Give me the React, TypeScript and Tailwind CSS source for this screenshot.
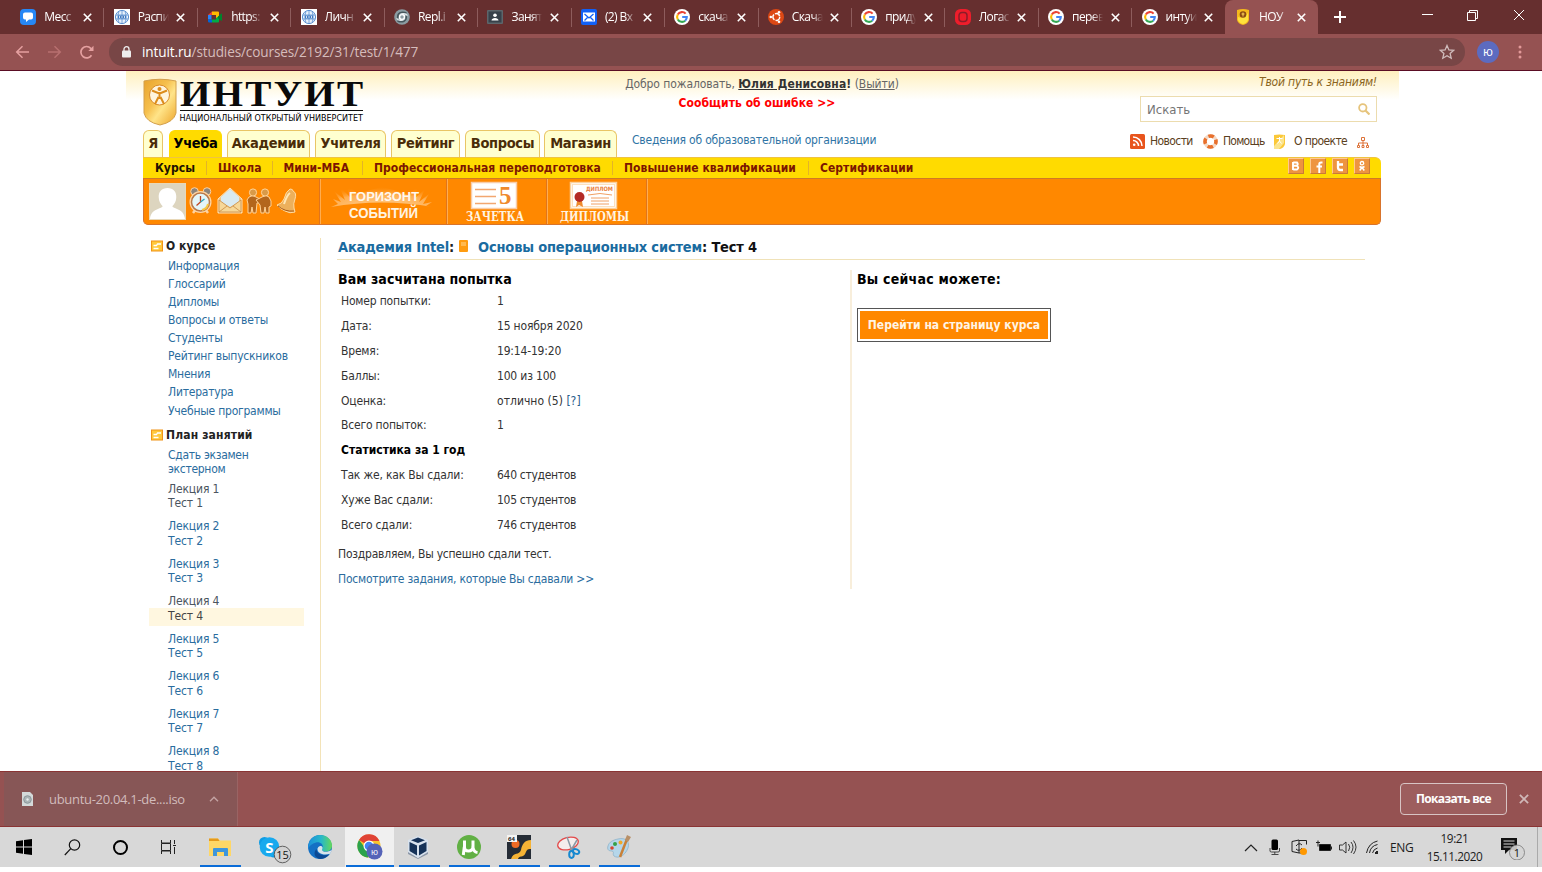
import type { ReactNode } from "react";

const ui = "font-['Open_Sans','Noto_Sans',sans-serif]";

/* ---------- favicons ---------- */

const Google = () => (
  <svg className="size-4" viewBox="0 0 16 16">
    <circle cx="8" cy="8" r="8" fill="#fff" />
    <g fill="none" strokeWidth="2.1">
      <path d="M11.6 4.6A4.9 4.9 0 0 0 3.8 5.5" stroke="#ea4335" />
      <path d="M3.8 5.5a4.9 4.9 0 0 0 0 5" stroke="#fbbc05" />
      <path d="M3.8 10.5a4.9 4.9 0 0 0 7.4 1.2" stroke="#34a853" />
      <path d="M11.2 11.7A4.9 4.9 0 0 0 12.8 8H8.2" stroke="#4285f4" />
    </g>
  </svg>
);
const Message = () => (
  <svg className="size-4" viewBox="0 0 16 16">
    <rect width="16" height="16" rx="4" fill="#2787f5" />
    <path d="M5 3.5h6A2 2 0 0 1 13 5.500v3a2 2 0 0 1-2 2H9L6 13v-2.500H5a2 2 0 0 1-2-2v-3a2 2 0 0 1 2-2z" fill="#fff" />
  </svg>
);
const Globe = () => (
  <svg className="size-4" viewBox="0 0 16 16">
    <rect width="16" height="16" fill="#fff" />
    <circle cx="8" cy="8" r="6.600" fill="#e8f1fb" stroke="#5b8fd0" />
    <path d="M2 6h12M2 10h12M8 1.500v13M5 2.500c-1.500 3-1.500 8 0 11M11 2.500c1.500 3 1.500 8 0 11" stroke="#5b8fd0" strokeWidth=".8" fill="none" />
    <path d="M4 6.500h8v3H4z" fill="#3f78c0" />
    <path d="M5.500 7v2M8 7v2M10.500 7v2" stroke="#fff" strokeWidth=".8" />
  </svg>
);
const Meet = () => (
  <svg className="size-4" viewBox="0 0 16 16">
    <path d="M1 6l4-3.500v3.500z" fill="#ea4335" />
    <path d="M1 6h3.500v4.500H1z" fill="#2684fc" />
    <path d="M1 10.500h4v3H2.200A1.200 1.200 0 0 1 1 12.300z" fill="#0066da" />
    <path d="M5 2.500h6a1 1 0 0 1 1 1V8L9 10V6H5z" fill="#ffba00" />
    <path d="M5 10.500h4V9l3-2v5.500a1 1 0 0 1-1 1H5z" fill="#00ac47" />
    <path d="M11 7.500l3.200-3c.4-.3.800 0 .8.400v6.500c0 .4-.5.700-.8.400L11 9.300z" fill="#00832d" />
  </svg>
);
const Replit = () => (
  <svg className="size-4" viewBox="0 0 16 16">
    <circle cx="8" cy="8" r="7.800" fill="#8b9ca2" />
    <g fill="none" strokeWidth="1.500">
      <circle cx="8" cy="8" r="2.500" stroke="#fff" />
      <path d="M3.800 9C3 4.500 7 1.800 12.500 4M12.200 7c.8 4.500-3.200 7.200-8.700 5" stroke="#46565c" />
      <path d="M5.500 6.500C7 3.800 11.500 4 13.500 6.500M10.500 9.500C9 12.200 4.500 12 2.500 9.500" stroke="#e8eef0" strokeWidth="1.200" />
    </g>
  </svg>
);
const Classroom = () => (
  <svg className="size-4" viewBox="0 0 16 16">
    <rect y="1" width="16" height="14" rx="1" fill="#5d666b" />
    <rect x="1.500" y="2.500" width="13" height="11" fill="#37414a" />
    <circle cx="8" cy="6.300" r="1.800" fill="#fff" />
    <path d="M4.500 11.500c0-3.500 7-3.500 7 0z" fill="#fff" />
  </svg>
);
const Mail = () => (
  <svg className="size-4" viewBox="0 0 16 16">
    <rect width="16" height="16" rx="2" fill="#1260f5" />
    <rect x="2" y="3.500" width="12" height="9" fill="#fff" />
    <path d="M3.500 5L8 9l4.500-4M3.500 11.500l3-3M12.500 11.500l-3-3" stroke="#1260f5" strokeWidth="1.300" fill="none" />
  </svg>
);
const Ubuntu = () => (
  <svg className="size-4" viewBox="0 0 16 16">
    <circle cx="8" cy="8" r="8" fill="#dd4814" />
    <circle cx="8.300" cy="8" r="3.400" fill="none" stroke="#fff" strokeWidth="1.500" strokeDasharray="6 1.120" />
    <circle cx="2.800" cy="8" r="1.300" fill="#fff" />
    <circle cx="11" cy="3.300" r="1.300" fill="#fff" />
    <circle cx="11" cy="12.700" r="1.300" fill="#fff" />
  </svg>
);
const RedO = () => (
  <svg className="size-4" viewBox="0 0 16 16">
    <rect width="16" height="16" rx="5.500" fill="#ee1d2b" />
    <rect x="4" y="3.500" width="8" height="9" rx="3" fill="none" stroke="#8c1c28" strokeWidth="1.500" />
    <rect x="6.300" y="5.800" width="3.400" height="4.400" rx="1" fill="#ee1d2b" />
  </svg>
);
const MiniShield = ({ className = "size-4" }: { className?: string }) => (
  <svg className={className} viewBox="0 0 16 16">
    <path d="M2 1q6-2 12 0v10q-1 4-6 5-5-1-6-5z" fill="#f6b91c" />
    <path d="M3 8q5 2 10-4v7q-1 3-5 4-4-1-5-4z" fill="#ffe23c" />
    <circle cx="8" cy="5.500" r="3.300" fill="#8a4a12" />
    <path d="M8 3.500v4M6.500 5h3" stroke="#ffd75a" strokeWidth="1" />
  </svg>
);

const tabs: [string, ReactNode][] = [
  ["Месс", <Message />],
  ["Распи", <Globe />],
  ["https:", <Meet />],
  ["Личн", <Globe />],
  ["Repl.i", <Replit />],
  ["Занят", <Classroom />],
  ["(2) Вх", <Mail />],
  ["скача", <Google />],
  ["Скача", <Ubuntu />],
  ["приду", <Google />],
  ["Логас", <RedO />],
  ["перев", <Google />],
  ["интуи", <Google />],
  ["НОУ", <MiniShield />],
];

const Cross = ({ className = "size-[9px]" }: { className?: string }) => (
  <svg className={className} viewBox="0 0 9 9">
    <path d="M.8.8l7.400 7.400M8.200.8L.8 8.200" stroke="currentColor" strokeWidth="1.600" />
  </svg>
);

function TabStrip() {
  return (
    <div className="flex h-[34px] bg-[#662f2f] pl-[10px] text-white">
      {tabs.map(([title, icon], i) => {
        const active = i === 13;
        return (
          <div
            key={i}
            className={
              "relative flex w-[93.450px] shrink-0 items-center pl-[10.300px] " +
              (active ? "rounded-t-[8px] bg-[#955252]" : "")
            }
          >
            {i > 0 && !active && <span className="absolute top-[8px] left-0 h-[19px] w-px bg-[#8e5c5c]" />}
            {icon}
            <span className="ml-[8px] w-[31px] text-[12px] tracking-[-0.600px] whitespace-nowrap [mask-image:linear-gradient(to_right,#000_65%,transparent)]">
              {title}
            </span>
            <Cross className="ml-[7.500px] size-[9px] shrink-0" />
          </div>
        );
      })}
      <div className="flex flex-1 items-center pl-[16px]">
        <svg className="size-[12px]" viewBox="0 0 12 12">
          <path d="M6 0v12M0 6h12" stroke="#fff" strokeWidth="2" />
        </svg>
        <svg className="ml-auto h-[12px] w-[103px] -translate-y-[2px]" viewBox="0 0 103 12">
          <g stroke="#fff" strokeWidth="1" fill="none">
            <path d="M0 5.500h11M45.500 3.500h8v8h-8zM47.500 3.500v-2h8v8h-2M92 1l10 10M102 1L92 11" />
          </g>
        </svg>
        <span className="w-[17px]" />
      </div>
    </div>
  );
}

function Toolbar() {
  return (
    <div className="flex h-[37px] items-center border-b border-[#5a0d24] bg-[#955252] pl-[15px]">
      <svg className="h-[14px] w-[80px]" viewBox="0 0 80 14" fill="none" strokeWidth="1.500">
        <path d="M14 7H2M7.500 1.200L1.700 7l5.800 5.800" stroke="#e5a0a0" />
        <path d="M33 7h12M39.500 1.200L45.300 7l-5.800 5.800" stroke="#b87070" />
        <path d="M76.500 10.200A5.700 5.700 0 1 1 75.800 3.300L77.500 5" stroke="#e5a0a0" strokeWidth="1.700" />
        <path d="M78.500.8v5.200h-5.200z" fill="#e5a0a0" />
      </svg>
      <div className="ml-[14px] flex h-[28px] w-[1356px] items-center rounded-full bg-[#784646] pl-[13px]">
        <svg className="h-[12px] w-[9px]" viewBox="0 0 9 12">
          <rect y="4.500" width="9" height="7" rx="1" fill="#eee" />
          <path d="M2 5V3.200a2.500 2.500 0 0 1 5 0V5" stroke="#eee" strokeWidth="1.300" fill="none" />
        </svg>
        <span className={"ml-[11px] pt-px text-[13.600px] tracking-[-0.130px] text-[#d6bcbc] " + ui}>
          <span className="text-white">intuit.ru</span>/studies/courses/2192/31/test/1/477
        </span>
        <svg className="mr-[10px] ml-auto size-[16px]" viewBox="0 0 16 16">
          <path d="M8 1.500l1.900 4.400 4.800.4-3.600 3.200 1.100 4.700L8 11.700l-4.200 2.500 1.100-4.700L1.300 6.300l4.800-.4z" fill="none" stroke="#d0bcbc" strokeWidth="1.300" />
        </svg>
      </div>
      <div className={"ml-[12px] flex size-[22px] items-center justify-center rounded-full bg-[#5c6bc0] text-[12px] text-white " + ui}>ю</div>
      <svg className="ml-[19px] h-[14px] w-[4px]" viewBox="0 0 4 14" fill="#e39a9a">
        <circle cx="2" cy="2" r="1.500" />
        <circle cx="2" cy="7" r="1.500" />
        <circle cx="2" cy="12" r="1.500" />
      </svg>
    </div>
  );
}

/* ---------- site header ---------- */

function Logo() {
  return (
    <svg className="h-[50px] w-[222px] shrink-0 overflow-visible" viewBox="143 77 222 50">
      <defs>
        <linearGradient id="shield" x1="0" y1="0" x2="1" y2="1">
          <stop offset="0" stopColor="#e8a32c" />
          <stop offset=".4" stopColor="#f6c04e" />
          <stop offset=".6" stopColor="#ffe489" />
          <stop offset="1" stopColor="#eda428" />
        </linearGradient>
      </defs>
      <path d="M144 81q16-3.500 32 0v32q-2 9-16 12-14-3-16-12z" fill="url(#shield)" stroke="#d3a04c" />
      <circle cx="159.500" cy="95" r="10" fill="#fff4dc" stroke="#d98c2c" />
      <circle cx="159.500" cy="89" r="2" fill="#dc8c1c" />
      <path d="M152 90.500l6 2.500h3l6-2.500M159.500 92v7M158.500 97l-3.500 7M160.500 97l3.500 7" stroke="#dc8c1c" strokeWidth="2" fill="none" />
      <g transform="translate(180 105.700) scale(1.120 1)">
        <text textLength="163.500" lengthAdjust="spacing" fontFamily="Liberation Serif" fontWeight="700" fontSize="35" fill="#0a0a0a">ИНТУИТ</text>
      </g>
      <path d="M180 110.500h183" stroke="#111" strokeWidth="1.200" />
      <text x="179.500" y="121" textLength="183.500" lengthAdjust="spacingAndGlyphs" fontFamily="DejaVu Sans, sans-serif" fontSize="8" fill="#000">НАЦИОНАЛЬНЫЙ ОТКРЫТЫЙ УНИВЕРСИТЕТ</text>
    </svg>
  );
}

function Header() {
  return (
    <div className="mx-auto ml-[126px] flex h-[59px] w-[1273px] bg-[linear-gradient(#fff0be,#fff_29px)] pl-[17px]">
      <div className="pt-[6px]">
        <Logo />
      </div>
      <div className="ml-[199px] w-[396px] pt-[4px] text-center text-[12px] leading-[18px] text-[#666]">
        <div className="tracking-[-0.080px]">
          Добро пожаловать, <b className="tracking-[0.130px] text-[#333]"><span className="underline">Юлия Денисовна</span>!</b> (<span className="underline">Выйти</span>)
        </div>
        <div className="pt-px pr-[10px] font-bold text-[#f00] tracking-[0.050px]">Сообщить об ошибке &gt;&gt;</div>
      </div>
      <div className="ml-auto mr-[22px] w-[237px]">
        <div className="pt-[2px] text-right text-[12px] leading-[18px] tracking-[-0.200px] text-[#8a6420] italic">Твой путь к знаниям!</div>
        <div className="mt-[5px] flex h-[26px] items-center justify-between border border-[#ecdcae] bg-white pt-px pr-[6px] pl-[6px] text-[13px] text-[#757575]">
          Искать
          <svg className="-mt-[2px] size-[12px]" viewBox="0 0 12 12" fill="none" stroke="#e6c47c">
            <circle cx="4.800" cy="4.800" r="3.700" strokeWidth="1.800" />
            <path d="M7.500 7.500l4 4" strokeWidth="2.200" />
          </svg>
        </div>
      </div>
    </div>
  );
}

function TopLink({ children }: { children: ReactNode }) {
  return <span className="whitespace-nowrap text-[#5a4020]">{children}</span>;
}

function MainNav() {
  const tab =
    "flex h-[27px] items-center justify-center rounded-t-[6px] border border-b-0 border-[#e9c566] bg-[#ffffd0] text-[14.500px] tracking-[-0.350px] font-bold text-[#4a2c08] whitespace-nowrap ";
  return (
    <div className="ml-[143px] flex h-[27px] w-[1238px]">
      <div className={tab + "w-[20px]"}>Я</div>
      <div className={tab + "ml-[6px] w-[53px] border-[#ffdb00]! bg-[#ffdb00]! text-black!"}>Учеба</div>
      <div className={tab + "ml-[5px] w-[83px]"}>Академии</div>
      <div className={tab + "ml-[5px] w-[71px]"}>Учителя</div>
      <div className={tab + "ml-[5px] w-[69px]"}>Рейтинг</div>
      <div className={tab + "ml-[5px] w-[75px]"}>Вопросы</div>
      <div className={tab + "ml-[4px] w-[73px]"}>Магазин</div>
      <div className="ml-[15px] pt-[1px] text-[12px] leading-[19px] tracking-[-0.180px] text-[#2f74a5]">Сведения об образовательной организации</div>
      <div className="mr-[12px] ml-auto flex h-[22px] items-center text-[12px]">
        <svg className="mr-[5px] size-[15px]" viewBox="0 0 15 15">
          <rect width="15" height="15" rx="1.500" fill="#e8541c" />
          <g fill="none" stroke="#fff" strokeWidth="1.500">
            <path d="M3 6.500A5.500 5.500 0 0 1 8.500 12M3 3a9 9 0 0 1 9 9" />
          </g>
          <circle cx="4.200" cy="10.800" r="1.300" fill="#fff" />
        </svg>
        <span className="w-[53px] tracking-[-0.600px]"><TopLink>Новости</TopLink></span>
        <svg className="mr-[5px] size-[15px]" viewBox="0 0 15 15" fill="none">
          <circle cx="7.500" cy="7.500" r="5.500" stroke="#f3d9c6" strokeWidth="3.600" />
          <circle cx="7.500" cy="7.500" r="5.500" stroke="#e8702c" strokeWidth="3.600" strokeDasharray="5.600 3.040" strokeDashoffset="-5.800" />
        </svg>
        <span className="w-[50px] tracking-[-0.750px]"><TopLink>Помощь</TopLink></span>
        <svg className="mr-[8px] h-[15px] w-[13px]" viewBox="0 0 13 15">
          <path d="M1 1q5-1 11 0v9q-1 4-5 5H1z" fill="#fbc838" />
          <path d="M1 12L11 1v8L6 15H1z" fill="#fbe48c" />
          <path d="M3.500 4.500h6M6.500 3v4M6.500 7l-2 2.500M6.500 7l2 2.500" stroke="#fff" fill="none" />
        </svg>
        <span className="w-[63px] tracking-[-0.600px]"><TopLink>О проекте</TopLink></span>
        <svg className="mt-[3px] h-[12px] w-[12px]" viewBox="0 0 12 12" fill="none" stroke="#dd7238">
          <path d="M4.500.5h3v3h-3zM.5 8.500h2v2h-2zM5 8.500h2v2H5zM9.500 8.500h2v2h-2zM6 3.500v5M1.500 8V6h9v2" />
        </svg>
      </div>
    </div>
  );
}

function Social({ children }: { children: ReactNode }) {
  return (
    <svg className="size-[16px] rounded-[1px] border border-[#c9793a] border-t-[#ffc890] border-l-[#ffc890] bg-[#ee9440]" viewBox="0 0 14 14">
      {children}
    </svg>
  );
}

function SubNav() {
  const sep = "h-[14px] w-px shrink-0 bg-[#e3b428] mt-[3px]";
  const item = "shrink-0 text-[12px] leading-[20px] font-bold text-[#7c1500] whitespace-nowrap tracking-[0.050px] ";
  return (
    <div className="flex h-[21px] border-t border-[#efc341] rounded-tr-[6px] bg-[#ffdb00] pl-[12px]">
      <span className={item + "w-[51px] text-[#201000]!"}>Курсы</span>
      <i className={sep} />
      <span className={item + "w-[64.500px] pl-[11px]"}>Школа</span>
      <i className={sep} />
      <span className={item + "w-[89.500px] pl-[11px]"}>Мини-МБА</span>
      <i className={sep} />
      <span className={item + "w-[249px] pl-[11px] tracking-[0.010px]!"}>Профессиональная переподготовка</span>
      <i className={sep} />
      <span className={item + "w-[195px] pl-[11px]"}>Повышение квалификации</span>
      <i className={sep} />
      <span className={item + "pl-[11px]"}>Сертификации</span>
      <div className="mr-[11px] ml-auto flex gap-[6px]">
        <Social><path d="M4 3v8M4.200 3.500H8q1.500 1.700 0 3.300H4.500M8 7q2.500 1.800 0 3.500H4.200" fill="none" stroke="#fff" strokeWidth="1.900" /></Social>
        <Social><path d="M11.500 3.500H10Q8.300 3.500 8.300 5v9M5.500 7.500h5.500" fill="none" stroke="#fff" strokeWidth="2" /></Social>
        <Social><path d="M5 2v6.500Q5 11 7.500 11H10M5 5.500h5" fill="none" stroke="#fff" strokeWidth="2.300" /></Social>
        <Social>
          <circle cx="7" cy="4.200" r="1.700" fill="none" stroke="#fff" strokeWidth="1.300" />
          <path d="M4.500 7.500q2.500 1.500 5 0M7 8.500l-2.300 3M7 8.500l2.300 3" fill="none" stroke="#fff" strokeWidth="1.500" />
        </Social>
      </div>
    </div>
  );
}

function OrangeBar() {
  return (
    <div className="flex h-[47px] rounded-b-[5px] border border-[#d8742c] border-t-[#cf7a24] bg-[#ff8800]">
      <div className="flex w-[176px] items-center border-r border-[#e0741c] pl-[5px]">
        <svg className="size-[37px] shrink-0 border border-[#e8d8b8] bg-[#ddd5bf]" viewBox="0 0 36 36">
          <path d="M18 4c6 0 9.500 4 9 10 0 4-2 7-4 9 1 3 12 2 13 13H0c1-11 12-10 13-13-2-2-4-5-4-9-.5-6 3-10 9-10z" fill="#fff" />
        </svg>
        <svg className="ml-[2px] h-[30px] w-[110px]" viewBox="188 187 110 30">
          <circle cx="194.500" cy="191.500" r="3.800" fill="#8d857c" stroke="#ffd2a0" />
          <circle cx="207" cy="191.500" r="3.800" fill="#8d857c" stroke="#ffd2a0" />
          <path d="M193 213l3-4M208 213l-3-4" stroke="#ffd2a0" strokeWidth="2.500" />
          <circle cx="200.500" cy="202" r="11" fill="#ffd6a4" />
          <circle cx="200.500" cy="202" r="9" fill="#e4f6f8" stroke="#b8794a" strokeWidth="1.500" />
          <path d="M200.500 196V202l-4 3.500" stroke="#c04420" fill="none" strokeWidth="1.300" />
          <path d="M200.500 202l4-3" stroke="#2aa3b8" strokeWidth="1.300" />
          <path d="M202 210a8 8 0 0 0 6-6" stroke="#f8c840" strokeWidth="2" fill="none" />
          <path d="M218 199l12-11 12 11v14h-24z" fill="#efc588" stroke="#ffe3b8" />
          <path d="M221 197l9-8 9 8v5l-9 5-9-5z" fill="#d9eaf0" />
          <path d="M219 200l11 8 11-8v12h-22zM219 212l8-6M241 212l-8-6" fill="#f7d898" stroke="#c98b43" strokeWidth=".8" />
          <g fill="#b3661c" stroke="#ffd49a" strokeWidth="1">
            <path d="M249 197q4-3 7 0l4 2 1 3-4 1-1 10h-3l-1-6-1 6h-3v-9l-1-4z" />
            <path d="M262 197q4-3 7 0l2 4v5l-2 1v6h-3l-1-6-1 6h-3l-1-8-4-5z" />
            <circle cx="253" cy="192.500" r="3.600" fill="#d99a48" />
            <circle cx="265" cy="192.500" r="3.600" fill="#d99a48" />
          </g>
          <path d="M290 189q3 0 3 2 4 2 2 8-2 5-1 9l1 4q-5 2-10-1-5-2-8-6 5-1 7-6 2-8 6-10z" fill="#ecb05c" stroke="#ffdca4" />
          <path d="M284 204q3-9 6-11" stroke="#ffe7b6" strokeWidth="2" fill="none" />
          <path d="M278 206q7 6 16 5" stroke="#a85c1c" fill="none" />
        </svg>
      </div>
      <div className="flex w-[127px] items-center justify-center border-r border-l border-[#e0741c] border-l-[#ffad50]">
        <svg className="h-[42px] w-[114px] overflow-visible" viewBox="326 180 114 42">
          <defs>
            <radialGradient id="glow" cx=".5" cy="1" r=".9">
              <stop offset="0" stopColor="#ffe2b8" />
              <stop offset=".6" stopColor="#ffb967" />
              <stop offset="1" stopColor="#ff8800" stopOpacity="0" />
            </radialGradient>
          </defs>
          <path d="M330 206l7-3-5-5 8 3-7-11 11 9-6-14 11 11-4-13 12 10 12-4 12-3 12 3 14 5 10-9-4 13 11-10-6 13 10-8-6 10 9-2-6 4 7 1q-52-9-102 0z" fill="url(#glow)" opacity=".8" />
          <text x="348" y="200" textLength="70" lengthAdjust="spacingAndGlyphs" fontFamily="Liberation Sans" fontWeight="700" fontSize="13.500" fill="#fff8ee">ГОРИЗОНТ</text>
          <text x="348" y="216.500" textLength="69" lengthAdjust="spacingAndGlyphs" fontFamily="Liberation Sans" fontWeight="700" fontSize="14" fill="#fff4e2">СОБЫТИЙ</text>
        </svg>
      </div>
      <div className="flex w-[100px] justify-center border-r border-l border-[#e0741c] border-l-[#ffad50]">
        <svg className="-ml-[3px] h-[44px] w-[66px] overflow-visible" viewBox="463 179 66 44">
          <rect x="471.500" y="182.500" width="45" height="26" fill="#fff" stroke="#f8cca8" strokeWidth="1.500" />
          <path d="M475 189.500h21M475 196.500h21M475 203.500h21" stroke="#f2a770" strokeWidth="1.500" />
          <text x="499" y="203.500" fontFamily="Liberation Serif" fontWeight="700" fontSize="25" fill="#ef8a2c">5</text>
          <text x="466" y="221" textLength="58" lengthAdjust="spacingAndGlyphs" fontFamily="DejaVu Serif, serif" fontWeight="700" fontSize="12" fill="#fff4e2">ЗАЧЕТКА</text>
        </svg>
      </div>
      <div className="flex w-[100px] justify-center border-r border-l border-[#e0741c] border-l-[#ffad50]">
        <svg className="-ml-[3px] h-[44px] w-[76px] overflow-visible" viewBox="558 179 76 44">
          <rect x="570.500" y="182.500" width="46" height="26" fill="#fff" stroke="#fbd09c" strokeWidth="1.500" />
          <rect x="572.500" y="184.500" width="42" height="22" fill="none" stroke="#f8c17c" strokeDasharray="1 1" />
          <path d="M577 201l-1 6 3-2 4 2-1-6" fill="#ef8a2c" />
          <circle cx="579.500" cy="197" r="5" fill="#b42a24" />
          <text x="586" y="191" textLength="27" lengthAdjust="spacingAndGlyphs" fontFamily="DejaVu Sans" fontWeight="700" fontSize="6" fill="#e9803c">ДИПЛОМ</text>
          <path d="M588 195q12-3 24 0M591 198h18M591 201h18M591 204h18" stroke="#f0a064" fill="none" />
          <text x="560" y="221" textLength="69" lengthAdjust="spacingAndGlyphs" fontFamily="DejaVu Serif, serif" fontWeight="700" fontSize="12" fill="#fff4e2">ДИПЛОМЫ</text>
        </svg>
      </div>
      <div className="w-px bg-[#ffad50]" />
    </div>
  );
}

/* ---------- page body ---------- */

const FolderIcon = () => (
  <svg className="mr-[3px] size-[12px]" viewBox="0 0 12 12">
    <rect x=".5" y="1" width="11" height="10" fill="#ffc83c" stroke="#f09418" />
    <path d="M2.500 5.500h3l1-1.500h3.500M2.500 8.500h5" stroke="#fff" strokeWidth="1.300" fill="none" />
  </svg>
);

const aboutLinks = ["Информация", "Глоссарий", "Дипломы", "Вопросы и ответы", "Студенты", "Рейтинг выпускников", "Мнения", "Литература", "Учебные программы"];

function Sidebar() {
  return (
    <div className="ml-[143px] h-[533px] w-[178px] shrink-0 overflow-hidden border-r border-[#f3e3b8] pl-[8px] text-[12px] tracking-[-0.220px] text-[#2a6c9e]">
      <div className="flex h-[16px] items-center font-bold tracking-[0.080px] text-[#222]"><FolderIcon />О курсе</div>
      <div className="mt-[3px] pl-[17px]">
        {aboutLinks.map((t) => (
          <div key={t} className="h-[18.070px] leading-[18px]">{t}</div>
        ))}
      </div>
      <div className="mt-[7px] flex h-[17px] items-center font-bold tracking-[0.150px] text-[#222]"><FolderIcon />План занятий</div>
      <div className="mt-[4px] pl-[17px] leading-[14.400px] tracking-[-0.300px]">Сдать экзамен<br />экстерном</div>
      <div className="mt-[5.300px] tracking-[-0.150px]">
        {[1, 2, 3, 4, 5, 6, 7, 8].map((n) => (
          <div key={n} className="h-[37.500px] leading-[14.600px]">
            <div className={n === 1 || n === 4 ? "pl-[17px] text-[#4b5560]" : "pl-[17px]"}>Лекция {n}</div>
            {n === 4 ? (
              <div className="-mt-px -ml-[2px] h-[18px] w-[155px] bg-[#fff7e0] pl-[19px] leading-[16px] text-[#444]">Тест 4</div>
            ) : (
              <div className={n === 1 ? "pl-[17px] text-[#4b5560]" : "pl-[17px]"}>Тест {n}</div>
            )}
          </div>
        ))}
      </div>
    </div>
  );
}

const rows: [string, ReactNode][] = [
  ["Номер попытки:", "1"],
  ["Дата:", "15 ноября 2020"],
  ["Время:", "19:14-19:20"],
  ["Баллы:", "100 из 100"],
  ["Оценка:", <>отлично (5) <span className="text-[#2a5c8a]">[?]</span></>],
  ["Всего попыток:", "1"],
  ["Статистика за 1 год", ""],
  ["Так же, как Вы сдали:", "640 студентов"],
  ["Хуже Вас сдали:", "105 студентов"],
  ["Всего сдали:", "746 студентов"],
];

function Result() {
  return (
    <div className="ml-[16px] w-[1028px] text-[12px] text-[#333]">
      <div className="flex h-[22px] items-center border-b border-[#f0e2b8] pb-[2px] pl-px text-[14.500px] font-bold tracking-[-0.180px] text-[#1a6ba0]">
        Академия Intel<span className="text-[#222]">:</span>
        <svg className="mr-[10px] -mt-[4px] ml-[5px] h-[12px] w-[9px]" viewBox="0 0 9 12">
          <rect width="9" height="12" rx="1" fill="#ff9c10" />
          <path d="M2 3h5M2 5h5" stroke="#ffd890" />
        </svg>
        Основы операционных систем<span className="whitespace-pre text-[#111]">: Тест 4</span>
      </div>
      <div className="mt-[10px] flex">
        <div className="h-[319px] w-[515px] border-r-2 border-[#f8eedb]">
          <div className="pl-px text-[14px] leading-[18px] font-bold tracking-[0.050px] text-black">Вам засчитана попытка</div>
          <div className="pl-[4px] tracking-[-0.180px]">
            {rows.map(([k, v]) => (
              <div key={k} className="flex h-[24.890px] leading-[26px]">
                <span className={v === "" ? "w-[156px] font-bold tracking-normal text-black" : "w-[156px]"}>{k}</span>
                <span className={k === "Оценка:" ? "tracking-[0.030px]" : k.endsWith("сдали:") ? "tracking-[-0.300px]" : ""}>{v}</span>
              </div>
            ))}
          </div>
          <div className="mt-[5px] pl-px leading-[25px] tracking-[-0.220px]">Поздравляем, Вы успешно сдали тест.</div>
          <div className="pl-px leading-[25px] tracking-[-0.220px] text-[#2a6c9e]">Посмотрите задания, которые Вы сдавали &gt;&gt;</div>
        </div>
        <div className="pl-[5px]">
          <div className="text-[14px] leading-[18px] font-bold tracking-[0.230px] text-black">Вы сейчас можете:</div>
          <div className="mt-[20px] flex h-[34px] w-[194px] items-center justify-center border border-[#555] bg-[#ff8800] text-[12px] font-bold whitespace-nowrap text-[#fff4e6] inset-ring-2 inset-ring-white">
            Перейти на страницу курса
          </div>
        </div>
      </div>
    </div>
  );
}

/* ---------- downloads bar and taskbar ---------- */

function Downloads() {
  return (
    <div className={"flex h-[56px] items-center border-t border-b border-[#8a3434] bg-[#955252] " + ui}>
      <div className="ml-[4px] flex h-full w-[234px] items-center border-r border-[#9a6464] bg-[#875656] pl-[18px] text-[13px] text-[#d2bcbc]">
        <svg className="h-[14px] w-[11px]" viewBox="0 0 11 14">
          <path d="M0 0h8l3 3v11H0z" fill="#d4dada" />
          <circle cx="5.500" cy="7.500" r="3.800" fill="#aab4b6" stroke="#8b979b" />
          <circle cx="5.500" cy="7.500" r="1.200" fill="#e8eeee" />
        </svg>
        <span className="ml-[16px] w-[160px] pt-[2px] tracking-[-0.300px]">ubuntu-20.04.1-de....iso</span>
        <svg className="h-[6px] w-[10px]" viewBox="0 0 10 6"><path d="M1 5.200L5 1.200l4 4" stroke="#c4a4a4" strokeWidth="1.400" fill="none" /></svg>
      </div>
      <div className="mr-[12px] ml-auto flex h-[32px] w-[107px] items-center justify-center rounded-[4px] border border-[#d8c4c4] bg-[#9d5e5e] text-[12px] font-bold tracking-[-0.650px] text-white">Показать все</div>
      <Cross className="mr-[13px] size-[10px] text-[#d0b8b8]" />
    </div>
  );
}

function Task({ w, children, open, active }: { w: string; children: ReactNode; open?: boolean; active?: boolean }) {
  return (
    <div className={"relative flex h-[40px] shrink-0 items-center justify-center " + w + (active ? " bg-[#f0f0f0]" : "")}>
      {children}
      {open && <span className={"absolute bottom-0 h-[2px] bg-[#0a6cd8] " + (active ? "w-[48px]" : "w-[41px]")} />}
    </div>
  );
}

function Taskbar() {
  return (
    <div className={"flex h-[40px] bg-[#d8d8d8] text-[#1c1c1c] " + ui}>
      <Task w="w-[48px]">
        <svg className="size-[16px]" viewBox="0 0 16 16"><path d="M0 2.200l7-1v6.300H0zM8 1l8-1v7.500H8zM0 8.500h7v6.300l-7-1zM8 8.500h8V16l-8-1z" /></svg>
      </Task>
      <Task w="w-[48px]">
        <svg className="size-[17px]" viewBox="0 0 17 17" fill="none" stroke="#111" strokeWidth="1.200"><circle cx="10.500" cy="6" r="5.200" /><path d="M6.800 9.700L.8 16" /></svg>
      </Task>
      <Task w="w-[48px]">
        <span className="size-[15px] rounded-full border-2 border-black" />
      </Task>
      <Task w="w-[48px]">
        <svg className="h-[16px] w-[17px]" viewBox="0 0 17 16" fill="none" stroke="#222"><path d="M1.500 1v3h9V1M1.500 15v-3h9v3M1.500 4.500v7h9v-7zM14.500 1v4M14.500 8v7M13 6.500h3" /></svg>
      </Task>
      <Task w="w-[56px]" open>
        <svg className="h-[19px] w-[22px]" viewBox="0 0 22 19">
          <path d="M0 1.500Q0 .5 1 .5h8l2 2h11V18H0z" fill="#ffd766" />
          <path d="M0 .5h9l1.500 2.500H0z" fill="#e59a1c" />
          <path d="M4 18v-7q0-1 1-1h13q1 0 1 1v7h-4v-4H8v4z" fill="#3f96dc" />
        </svg>
      </Task>
      <Task w="w-[46px]">
        <svg className="h-[30px] w-[34px] translate-x-[4px] translate-y-[3px]" viewBox="0 0 34 30">
          <circle cx="6.500" cy="7.500" r="5.500" fill="#0f9ce4" />
          <circle cx="16" cy="17" r="5.500" fill="#0f9ce4" />
          <circle cx="11.500" cy="12" r="9.800" fill="#18a9ee" />
          <text x="11.500" y="17.500" textAnchor="middle" fontFamily="Open Sans" fontWeight="700" fontSize="15" fill="#fff">S</text>
          <circle cx="24.500" cy="19.500" r="8.300" fill="#d2d2d2" stroke="#444" strokeWidth=".8" />
          <text x="24.500" y="23.500" textAnchor="middle" fontFamily="Open Sans" fontSize="11" fill="#111">15</text>
        </svg>
      </Task>
      <Task w="w-[51px]">
        <svg className="size-[24px]" viewBox="0 0 24 24">
          <defs>
            <linearGradient id="edge" x1="0" y1=".3" x2="1" y2=".3"><stop offset="0" stopColor="#1b8edb" /><stop offset=".55" stopColor="#28b8c8" /><stop offset="1" stopColor="#65d858" /></linearGradient>
          </defs>
          <circle cx="12" cy="12" r="12" fill="#1470c4" />
          <path d="M.2 11C1 4.500 6 0 12 0c7 0 12 5 12 10.500 0 4-3 6-6.500 6-3 0-4.500-1.500-3-3.500C16 9 11.500 6.500 8 7.500 4 8.500 1 11 .2 14z" fill="url(#edge)" />
          <path d="M8.500 14c0 4.500 5 7.500 12.500 5.500 0 0-3 4.500-9 4.500-5-1-7.500-6-3.500-10z" fill="#0d4a94" />
          <path d="M12 11c3 0 3 2 2 3.500 0 2.500 5 3.500 9.800.2l-1.500 4C15 21 9 18 9.500 13.500q.5-2 2.500-2.500z" fill="#d8e4ea" />
        </svg>
      </Task>
      <Task w="w-[49px]" open active>
        <svg className="size-[26px]" viewBox="0 0 26 26">
          <circle cx="12" cy="12" r="11.500" fill="#fbc52c" />
          <path d="M12 12L2 6A11.500 11.500 0 0 1 22.500 7H12z" fill="#e04336" />
          <path d="M2 6a11.500 11.500 0 0 0 9 17.500L15 14l-6 1z" fill="#2ba24c" />
          <circle cx="12" cy="12" r="5.500" fill="#fff" /><circle cx="12" cy="12" r="4.300" fill="#4285f4" />
          <circle cx="17.500" cy="17.500" r="8" fill="#5563b8" />
          <text x="17.500" y="20.500" textAnchor="middle" fontFamily="Open Sans" fontSize="8.500" fill="#fff">ю</text>
        </svg>
      </Task>
      <Task w="w-[50px]" open>
        <svg className="size-[24px] -translate-x-px" viewBox="0 0 24 24">
          <path d="M2 16l10 7 10-7v3l-10 5-10-5z" fill="#8d98a8" />
          <path d="M2 5l10-4 10 4v12l-10 6-10-6z" fill="#d8e2ee" />
          <path d="M5 5.200L12 2.500l7 2.700-7 2.900zM3.500 7l7.500 3.500v10L3.500 16zM20.500 7L13 10.500v10l7.500-4.500z" fill="#163258" />
        </svg>
      </Task>
      <Task w="w-[50px]" open>
        <svg className="size-[24px]" viewBox="0 0 24 24">
          <circle cx="12" cy="12" r="12" fill="#61b044" />
          <path d="M7.500 5.500V12q0 4 4 4t4.500-4V5.500M7.300 12L6.300 20M15.800 11q.5 6 4.700 6.500" fill="none" stroke="#fff" strokeWidth="3" />
        </svg>
      </Task>
      <Task w="w-[50px]" open>
        <svg className="size-[24px]" viewBox="0 0 24 24">
          <rect width="24" height="24" fill="#252c36" />
          <path d="M4 24c3-8 8-3 10-9 1-6 4-10 10-10v9c-6-1-4 5-8 7-2 1-4 0-5 3z" fill="#f5b335" />
          <circle cx="8.500" cy="9" r="4" fill="#ee6a24" />
          <rect width="10" height="7" fill="#f4f4f4" />
          <text x="1" y="6" fontFamily="Open Sans" fontWeight="700" fontSize="6" fill="#222">64</text>
        </svg>
      </Task>
      <Task w="w-[50px]" open>
        <svg className="size-[24px]" viewBox="0 0 24 24" fill="none">
          <ellipse cx="11" cy="8.500" rx="10.500" ry="6" transform="rotate(-15 11 8.500)" fill="#f4eded" stroke="#e34a4a" strokeWidth="1.300" />
          <path d="M10 2l5 14M20 5l-7 12" stroke="#8a9aa6" strokeWidth="1.500" />
          <ellipse cx="14.500" cy="19.500" rx="2.300" ry="3.400" stroke="#1688d0" strokeWidth="2" />
          <ellipse cx="19" cy="16.500" rx="3.300" ry="2.200" stroke="#1688d0" strokeWidth="2" transform="rotate(20 19 16.500)" />
        </svg>
      </Task>
      <Task w="w-[50px]" open>
        <svg className="size-[24px]" viewBox="0 0 24 24">
          <path d="M11 4c8-2 12 3 10 9-3 8-10 11-14 8-2-2 1-4-2-5-4 0-5-2-4-5 1-4 5-6 10-7z" fill="#b5d6ea" stroke="#86aec6" strokeWidth=".7" />
          <circle cx="8" cy="9" r="2" fill="#35a048" /><circle cx="13.500" cy="7.500" r="2" fill="#f0a828" /><circle cx="5" cy="13" r="1.800" fill="#d84432" />
          <path d="M20 4l-7 18" stroke="#c98038" strokeWidth="2.500" /><path d="M18 5l2-5 4 2-3 5z" fill="#b89068" />
        </svg>
      </Task>
      <div className="ml-auto flex items-center">
        <svg className="h-[18px] w-[135px]" viewBox="1244 838 135 18" fill="none" stroke="#222">
          <path d="M1245 851l6-6 6 6" strokeWidth="1.200" />
          <rect x="1271.500" y="839.500" width="6.500" height="10.500" rx="1.500" fill="#000" stroke="none" />
          <path d="M1270 848v3q0 1 1.500 1h6.500q1.500 0 1.500-1v-3M1274.800 852v2M1271.500 854.500h7" strokeWidth=".8" />
          <path d="M1292 841.500l7-1.500v13l-7-1.500zM1299 840.500h7.500v4M1299 853h4M1296 846q3-4 6-1M1302 848q-3 4-6 1" />
          <circle cx="1303.500" cy="851.500" r="3.500" fill="#ff9800" stroke="none" />
          <path d="M1319.500 844.500h11v6h-11z" fill="#000" /><path d="M1331.500 846.500v3M1316 842.500h4M1318 840.500v6" />
          <path d="M1339.500 845v5h3l3.500 3v-11l-3.500 3zM1348.500 844q2.500 3 0 7M1351 842q4 5 0 11M1353.500 840.500q5 6.500 0 13.500" strokeWidth=".9" />
          <path d="M1366.500 853q2-10 11-12M1369.500 853q1-7 8-8.500M1372.500 853q1-4 5-5" strokeWidth="1" />
          <path d="M1375 853h2v-2" strokeWidth="2" />
        </svg>
        <span className="ml-[11px] w-[36px] pt-px text-[12px] tracking-[-0.300px]">ENG</span>
        <div className="w-[57px] text-center text-[11.800px] leading-[18px] tracking-[-0.450px]">19:21<br />15.11.2020</div>
        <svg className="ml-[18px] h-[26px] w-[25px]" viewBox="0 0 25 26">
          <path d="M0 4h16v12H8l-4 4v-4H0z" fill="#111" />
          <path d="M2.500 7h11M2.500 10h11M2.500 13h8" stroke="#d8d8d8" strokeWidth="1.100" />
          <circle cx="16" cy="18.500" r="7.500" fill="#d5d5d5" fillOpacity=".9" stroke="#777" strokeWidth=".8" />
          <text x="16" y="22.500" textAnchor="middle" fontFamily="Open Sans" fontSize="11" fill="#111">1</text>
        </svg>
        <span className="ml-[11px] h-[40px] w-[5px] border-l border-[#aaa]" />
      </div>
    </div>
  );
}

export default function App() {
  return (
    <div className="h-[872px] w-[1542px] overflow-hidden bg-white font-['DejaVu_Sans_Condensed','DejaVu_Sans',sans-serif]">
      <div className={ui}>
        <TabStrip />
        <Toolbar />
      </div>
      <div className="h-[700px] overflow-hidden">
        <Header />
        <MainNav />
        <div className="ml-[143px] w-[1238px]">
          <SubNav />
          <OrangeBar />
        </div>
        <div className="mt-[13px] flex">
          <Sidebar />
          <Result />
        </div>
      </div>
      <Downloads />
      <Taskbar />
    </div>
  );
}
